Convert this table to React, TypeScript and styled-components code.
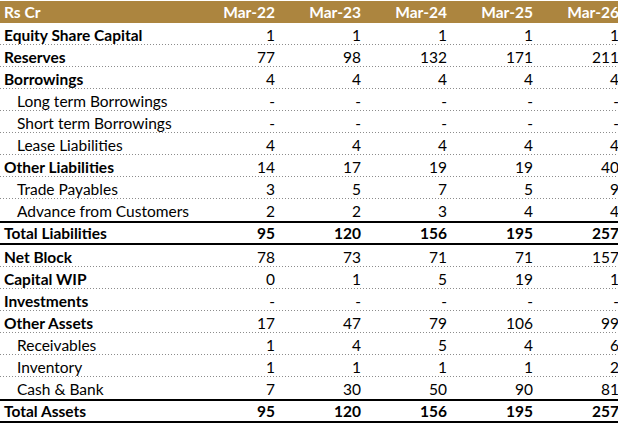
import styled, { createGlobalStyle } from "styled-components";

const GlobalStyle = createGlobalStyle`
  html, body {
    margin: 0;
    padding: 0;
    background: #ffffff;
    overflow: hidden;
  }
  body {
    font-family: Lato, "Liberation Sans", sans-serif;
    color: #000000;
  }
`;

type RowKind = "head" | "sub" | "total";

type SheetRow = {
  label: string;
  kind: RowKind;
  values: string[];
};

const years = ["Mar-22", "Mar-23", "Mar-24", "Mar-25", "Mar-26"];

const rows: SheetRow[] = [
  { label: "Equity Share Capital", kind: "head", values: ["1", "1", "1", "1", "1"] },
  { label: "Reserves", kind: "head", values: ["77", "98", "132", "171", "211"] },
  { label: "Borrowings", kind: "head", values: ["4", "4", "4", "4", "4"] },
  { label: "Long term Borrowings", kind: "sub", values: ["-", "-", "-", "-", "-"] },
  { label: "Short term Borrowings", kind: "sub", values: ["-", "-", "-", "-", "-"] },
  { label: "Lease Liabilities", kind: "sub", values: ["4", "4", "4", "4", "4"] },
  { label: "Other Liabilities", kind: "head", values: ["14", "17", "19", "19", "40"] },
  { label: "Trade Payables", kind: "sub", values: ["3", "5", "7", "5", "9"] },
  { label: "Advance from Customers", kind: "sub", values: ["2", "2", "3", "4", "4"] },
  { label: "Total Liabilities", kind: "total", values: ["95", "120", "156", "195", "257"] },
  { label: "Net Block", kind: "head", values: ["78", "73", "71", "71", "157"] },
  { label: "Capital WIP", kind: "head", values: ["0", "1", "5", "19", "1"] },
  { label: "Investments", kind: "head", values: ["-", "-", "-", "-", "-"] },
  { label: "Other Assets", kind: "head", values: ["17", "47", "79", "106", "99"] },
  { label: "Receivables", kind: "sub", values: ["1", "4", "5", "4", "6"] },
  { label: "Inventory", kind: "sub", values: ["1", "1", "1", "1", "2"] },
  { label: "Cash & Bank", kind: "sub", values: ["7", "30", "50", "90", "81"] },
  { label: "Total Assets", kind: "total", values: ["95", "120", "156", "195", "257"] },
];

const Sheet = styled.div`
  width: 622px;
  padding-top: 1px;
  font-size: 15.5px;
`;

const HeaderRow = styled.div`
  display: grid;
  grid-template-columns: 192px repeat(5, 86px);
  height: 22px;
  align-items: center;
  background: #ac853f;
  color: #ffffff;
  font-weight: 700;
`;

const Row = styled.div<{ $kind: RowKind; $ruled: boolean }>`
  display: grid;
  grid-template-columns: 192px repeat(5, 86px);
  box-sizing: border-box;
  height: ${(p) => (p.$kind === "total" ? "24px" : "22px")};
  align-items: center;
  padding-top: ${(p) => (p.$kind === "total" ? "0" : "1px")};
  border-top: ${(p) => (p.$kind === "total" ? "2px solid #000" : "none")};
  border-bottom: ${(p) => (p.$kind === "total" ? "2px solid #000" : "none")};
  background-image: ${(p) =>
    p.$ruled ? "linear-gradient(to right, #8c8c8c 1px, transparent 1px)" : "none"};
  background-size: 3px 1px;
  background-repeat: repeat-x;
  background-position: left bottom;
`;

const Label = styled.div<{ $kind: RowKind }>`
  padding-left: ${(p) => (p.$kind === "sub" ? "17px" : "4px")};
  font-weight: ${(p) => (p.$kind === "sub" ? 400 : 700)};
  white-space: nowrap;
`;

const Value = styled.div<{ $bold?: boolean }>`
  text-align: right;
  padding-right: 3px;
  font-weight: ${(p) => (p.$bold ? 700 : 400)};
  white-space: nowrap;
`;

const HeadLabel = styled.div`
  padding-left: 4px;
`;

export default function App() {
  return (
    <>
      <GlobalStyle />
      <Sheet>
        <HeaderRow>
          <HeadLabel>Rs Cr</HeadLabel>
          {years.map((y) => (
            <Value key={y} $bold>
              {y}
            </Value>
          ))}
        </HeaderRow>
        {rows.map((row, i) => {
          const next = rows[i + 1];
          const ruled = row.kind !== "total" && !!next && next.kind !== "total";
          return (
            <Row key={row.label} $kind={row.kind} $ruled={ruled}>
              <Label $kind={row.kind}>{row.label}</Label>
              {row.values.map((v, j) => (
                <Value key={j} $bold={row.kind === "total"}>
                  {v}
                </Value>
              ))}
            </Row>
          );
        })}
      </Sheet>
    </>
  );
}
